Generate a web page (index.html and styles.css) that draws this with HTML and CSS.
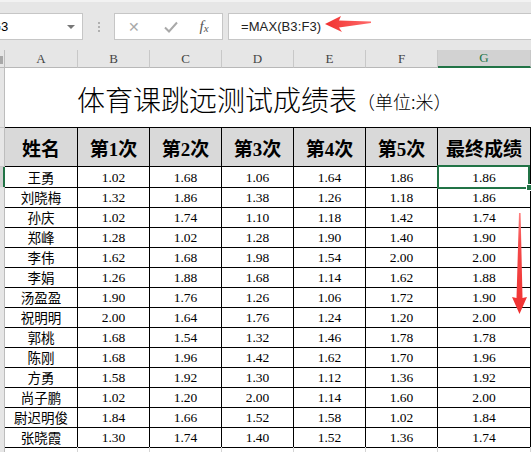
FILE: index.html
```html
<!DOCTYPE html>
<html lang="zh">
<head>
<meta charset="utf-8">
<link rel="stylesheet" href="styles.css">
</head>
<body>
<div class="app">
  <div class="toolbar">
    <div class="namebox"><span class="nametext">G3</span><span class="caret"></span></div>
    <div class="dots"><i></i><i></i><i></i></div>
    <div class="btns">
      <span class="btn x">✕</span>
      <span class="btn ok"><svg width="14" height="12" viewBox="0 0 14 12"><path d="M1 6.5 L5 10.5 L13 1.5" fill="none" stroke="#a9a9a9" stroke-width="2"/></svg></span>
      <span class="btn fx"><i>f</i><i class="sx">x</i></span>
    </div>
    <div class="formula">=MAX(B3:F3)</div>
  </div>

  <div class="sheet">
    <div class="row colhead">
      <div class="rh corner"><span class="tri"></span></div>
      <div class="ch">A</div><div class="ch">B</div><div class="ch">C</div><div class="ch">D</div><div class="ch">E</div><div class="ch">F</div><div class="ch sel">G</div>
    </div>
    <div class="row title">
      <div class="rh"></div>
      <div class="titlecell">体育课跳远测试成绩表<span class="unit">（单位:米）</span></div>
    </div>
    <div class="row head">
      <div class="rh"></div>
      <div class="c">姓名</div><div class="c">第1次</div><div class="c">第2次</div><div class="c">第3次</div><div class="c">第4次</div><div class="c">第5次</div><div class="c">最终成绩</div>
    </div>
    <div class="row data">
      <div class="rh rsel"></div>
      <div class="c n">王勇</div><div class="c">1.02</div><div class="c">1.68</div><div class="c">1.06</div><div class="c">1.64</div><div class="c">1.86</div><div class="c active">1.86<span class="handle"></span></div>
    </div>
    <div class="row data"><div class="rh"></div><div class="c n">刘晓梅</div><div class="c">1.32</div><div class="c">1.86</div><div class="c">1.38</div><div class="c">1.26</div><div class="c">1.18</div><div class="c">1.86</div></div>
    <div class="row data"><div class="rh"></div><div class="c n">孙庆</div><div class="c">1.02</div><div class="c">1.74</div><div class="c">1.10</div><div class="c">1.18</div><div class="c">1.42</div><div class="c">1.74</div></div>
    <div class="row data"><div class="rh"></div><div class="c n">郑峰</div><div class="c">1.28</div><div class="c">1.02</div><div class="c">1.28</div><div class="c">1.90</div><div class="c">1.40</div><div class="c">1.90</div></div>
    <div class="row data"><div class="rh"></div><div class="c n">李伟</div><div class="c">1.62</div><div class="c">1.68</div><div class="c">1.98</div><div class="c">1.54</div><div class="c">2.00</div><div class="c">2.00</div></div>
    <div class="row data"><div class="rh"></div><div class="c n">李娟</div><div class="c">1.26</div><div class="c">1.88</div><div class="c">1.68</div><div class="c">1.14</div><div class="c">1.62</div><div class="c">1.88</div></div>
    <div class="row data"><div class="rh"></div><div class="c n">汤盈盈</div><div class="c">1.90</div><div class="c">1.76</div><div class="c">1.26</div><div class="c">1.06</div><div class="c">1.72</div><div class="c">1.90</div></div>
    <div class="row data"><div class="rh"></div><div class="c n">祝明明</div><div class="c">2.00</div><div class="c">1.64</div><div class="c">1.76</div><div class="c">1.24</div><div class="c">1.20</div><div class="c">2.00</div></div>
    <div class="row data"><div class="rh"></div><div class="c n">郭桃</div><div class="c">1.68</div><div class="c">1.54</div><div class="c">1.32</div><div class="c">1.46</div><div class="c">1.78</div><div class="c">1.78</div></div>
    <div class="row data"><div class="rh"></div><div class="c n">陈刚</div><div class="c">1.68</div><div class="c">1.96</div><div class="c">1.42</div><div class="c">1.62</div><div class="c">1.70</div><div class="c">1.96</div></div>
    <div class="row data"><div class="rh"></div><div class="c n">方勇</div><div class="c">1.58</div><div class="c">1.92</div><div class="c">1.30</div><div class="c">1.12</div><div class="c">1.36</div><div class="c">1.92</div></div>
    <div class="row data"><div class="rh"></div><div class="c n">尚子鹏</div><div class="c">1.02</div><div class="c">1.20</div><div class="c">2.00</div><div class="c">1.14</div><div class="c">1.60</div><div class="c">2.00</div></div>
    <div class="row data"><div class="rh"></div><div class="c n">尉迟明俊</div><div class="c">1.84</div><div class="c">1.66</div><div class="c">1.52</div><div class="c">1.58</div><div class="c">1.02</div><div class="c">1.84</div></div>
    <div class="row data"><div class="rh"></div><div class="c n">张晓霞</div><div class="c">1.30</div><div class="c">1.74</div><div class="c">1.40</div><div class="c">1.52</div><div class="c">1.36</div><div class="c">1.74</div></div>
    <div class="row empty"><div class="rh"></div><div class="e"></div><div class="e"></div><div class="e"></div><div class="e"></div><div class="e"></div><div class="e"></div><div class="e"></div></div>
  </div>

  <svg class="arrow-left" width="60" height="24" viewBox="0 0 60 24">
    <defs><linearGradient id="gl" x1="0" y1="0" x2="1" y2="0"><stop offset="0" stop-color="#f0302f"/><stop offset="1" stop-color="#ff6a6a"/></linearGradient></defs>
    <polygon points="0,9 16,1 14,5.5 46,6.5 46,8 14,12.5 17,17" fill="url(#gl)"/>
  </svg>
  <svg class="arrow-down" width="20" height="110" viewBox="0 0 20 110">
    <defs><linearGradient id="gd" x1="0" y1="0" x2="0" y2="1"><stop offset="0" stop-color="#ff8080"/><stop offset="0.3" stop-color="#f44a4a"/><stop offset="1" stop-color="#f03030"/></linearGradient></defs>
    <polygon points="8,0 9.6,0 11.5,85 16,84 8.5,101 1,84 5.5,85" fill="url(#gd)"/>
  </svg>
</div>
</body>
</html>
```

FILE: styles.css
```css
html, body {
  margin: 0;
  padding: 0;
}
body {
  width: 531px;
  height: 452px;
  overflow: hidden;
  background: #e6e6e6;
  font-family: "Liberation Sans", Arial, sans-serif;
}
.app {
  position: relative;
  width: 531px;
  height: 452px;
  overflow: hidden;
}
.toolbar {
  height: 50px;
  box-sizing: border-box;
  border-top: 2px solid #f2f2f2;
  padding-top: 11px;
  display: flex;
  align-items: flex-start;
}
.namebox {
  width: 103px;
  height: 27px;
  margin-left: -20px;
  box-sizing: border-box;
  background: #fff;
  border: 1px solid #c6c6c6;
  display: flex;
  align-items: center;
  padding-left: 10px;
  font-size: 13px;
  color: #000;
  position: relative;
}
.caret {
  position: absolute;
  right: 7px;
  top: 11px;
  width: 0;
  height: 0;
  border-left: 4px solid transparent;
  border-right: 4px solid transparent;
  border-top: 4px solid #777;
}
.dots {
  width: 31px;
  height: 27px;
  display: flex;
  flex-direction: column;
  align-items: center;
  justify-content: center;
  gap: 2px;
}
.dots i {
  display: block;
  width: 2px;
  height: 2px;
  background: #b0b0b0;
}
.btns {
  width: 109px;
  height: 27px;
  box-sizing: border-box;
  background: #fff;
  border: 1px solid #c6c6c6;
  display: flex;
  align-items: center;
}
.btn {
  display: flex;
  align-items: center;
  justify-content: center;
  color: #a9a9a9;
}
.btn.x {
  width: 38px;
  font-size: 14px;
}
.btn.ok {
  width: 36px;
}
.btn.fx {
  width: 30px;
  font-family: "Liberation Serif", serif;
  color: #555;
  font-size: 15px;
}
.btn.fx .sx {
  font-size: 11px;
  margin-top: 3px;
}
.formula {
  margin-left: 5px;
  flex: 1;
  height: 27px;
  box-sizing: border-box;
  background: #fff;
  border: 1px solid #c6c6c6;
  border-right: none;
  padding-left: 12px;
  display: flex;
  align-items: center;
  font-size: 13px;
  color: #222;
  letter-spacing: 0.1px;
}

.sheet {
  background: #fff;
}
.row {
  display: grid;
  grid-template-columns: 5px 73px 72px 72px 72px 72px 72px 93px;
}
.row > div {
  box-sizing: border-box;
}
.rh {
  background: #e6e6e6;
  border-right: 1px solid #bdbdbd;
  border-bottom: 1px solid #c8c8c8;
}
.rh.rsel {
  border-right: 2px solid #217346;
  background: #d2d2d2;
}
.colhead {
  height: 18px;
  background: #e6e6e6;
}
.corner {
  position: relative;
  border-bottom: 1px solid #b8b8b8;
}
.tri {
  position: absolute;
  left: 0;
  top: 6px;
  width: 3px;
  height: 8px;
  background: #a8a8a8;
}
.ch {
  height: 18px;
  border-right: 1px solid #c8c8c8;
  border-bottom: 1px solid #b8b8b8;
  display: flex;
  align-items: center;
  justify-content: center;
  font-family: "Liberation Serif", serif;
  font-size: 13px;
  color: #444;
}
.ch.sel {
  background: #d2d2d2;
  color: #217346;
  border-bottom: 2px solid #217346;
}
.title {
  height: 60px;
}
.titlecell {
  grid-column: 2 / 9;
  border-bottom: 1px solid #000;
  display: flex;
  align-items: center;
  padding-left: 72px;
  padding-top: 2px;
  font-family: "Noto Sans CJK SC", sans-serif;
  font-weight: 300;
  font-size: 28px;
  color: #000;
  white-space: nowrap;
}
.unit {
  font-size: 18px;
  margin-left: 0;
  margin-top: 4px;
}
.head {
  height: 39px;
}
.head .c {
  background: #d9d9d9;
  font-family: "Liberation Serif", "Noto Sans CJK SC", serif;
  font-weight: 700;
  font-size: 19px;
}
.c {
  border-right: 1px solid #000;
  border-bottom: 1px solid #000;
  display: flex;
  align-items: center;
  justify-content: center;
  color: #000;
  white-space: nowrap;
}
.data {
  height: 20px;
}
.data .c {
  font-family: "Liberation Serif", "Noto Sans CJK SC", serif;
  font-size: 13.5px;
  padding-top: 1px;
}
.data .c.n {
  font-family: "Noto Sans CJK SC", sans-serif;
  font-size: 13.5px;
  padding-top: 0;
}
.c.active {
  position: relative;
}
.c.active::after {
  content: "";
  position: absolute;
  left: -1px;
  top: -2px;
  right: 0;
  bottom: -2px;
  border: 2px solid #217346;
}
.handle {
  position: absolute;
  right: -3px;
  bottom: -4px;
  width: 5px;
  height: 5px;
  background: #217346;
  border: 1px solid #fff;
  z-index: 2;
}
.empty {
  height: 20px;
}
.e {
  border-right: 1px solid #d4d4d4;
  border-bottom: 1px solid #d4d4d4;
}

.arrow-left {
  position: absolute;
  left: 325px;
  top: 15px;
}
.arrow-down {
  position: absolute;
  left: 511px;
  top: 213px;
}
```
